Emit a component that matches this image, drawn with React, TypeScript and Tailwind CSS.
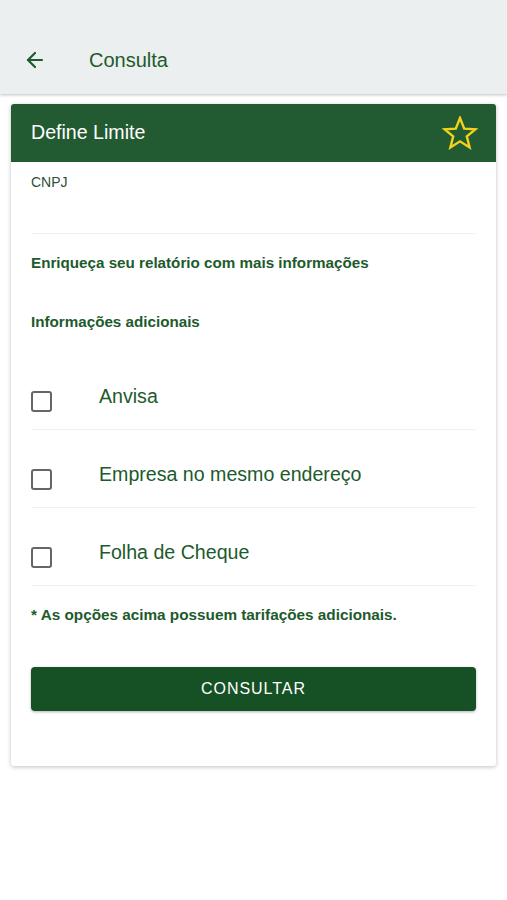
import { ArrowLeft } from 'lucide-react';

const options = ['Anvisa', 'Empresa no mesmo endereço', 'Folha de Cheque'];

function StarOutline() {
  return (
    <svg width="36" height="34" viewBox="0 0 36 34" fill="none">
      <polygon
        points="18,2 22.2,12.6 33.5,13.2 24.8,20.4 27.6,31.4 18,25.3 8.4,31.4 11.2,20.4 2.5,13.2 13.8,12.6"
        stroke="#f2d21b"
        strokeWidth="2.4"
        strokeLinejoin="miter"
      />
    </svg>
  );
}

export default function App() {
  return (
    <div
      className="w-[507px] h-[900px] bg-white"
      style={{ fontFamily: '"Liberation Sans", Arial, sans-serif' }}
    >
      <header className="h-[94px] bg-[#eceff0] flex items-end shadow-[0_1px_3px_rgba(0,0,0,0.25)] relative z-10">
        <div className="h-[68px] flex items-center w-full">
          <ArrowLeft className="ml-[23px] text-[#1d5a2c]" size={24} strokeWidth={2.2} />
          <span className="ml-[42px] text-[20px] text-[#1d5a2c]">Consulta</span>
        </div>
      </header>

      <div className="mx-[11px] mt-[10px] bg-white rounded-[3px] shadow-[0_1px_4px_rgba(0,0,0,0.25)] overflow-hidden">
        <div className="h-[58px] bg-[#225a32] flex items-center justify-between pl-5 pr-[18px]">
          <span className="text-[19.6px] text-white">Define Limite</span>
          <StarOutline />
        </div>

        <div className="px-5">
          <div className="h-[72px] border-b border-[#f1f1f1] pt-[10px]">
            <div className="text-[14px] leading-5 text-[#2f4f36]">CNPJ</div>
          </div>

          <div className="pt-[19px] text-[15.2px] leading-5 font-bold text-[#1d5a2c]">
            Enriqueça seu relatório com mais informações
          </div>
          <div className="mt-[39px] text-[15.2px] leading-5 font-bold text-[#1d5a2c]">
            Informações adicionais
          </div>

          <div className="mt-[20px]">
            {options.map((opt) => (
              <div
                key={opt}
                className="h-[78px] flex items-center pt-[13px] border-b border-[#f1f1f1]"
              >
                <div className="w-[21px] h-[21px] mt-2 border-2 border-[#666666] rounded-[3px]" />
                <span className="ml-[47px] text-[19.6px] text-[#1d5a2c]">{opt}</span>
              </div>
            ))}
          </div>

          <div className="pt-[19px] text-[15.3px] leading-5 font-bold text-[#1d5a2c]">
            * As opções acima possuem tarifações adicionais.
          </div>

          <button className="mt-[42px] mb-[55px] w-full h-[44px] rounded-[4px] bg-[#155124] text-white text-[16px] tracking-[0.06em] shadow-[0_1px_3px_rgba(0,0,0,0.3)]">
            CONSULTAR
          </button>
        </div>
      </div>
    </div>
  );
}
